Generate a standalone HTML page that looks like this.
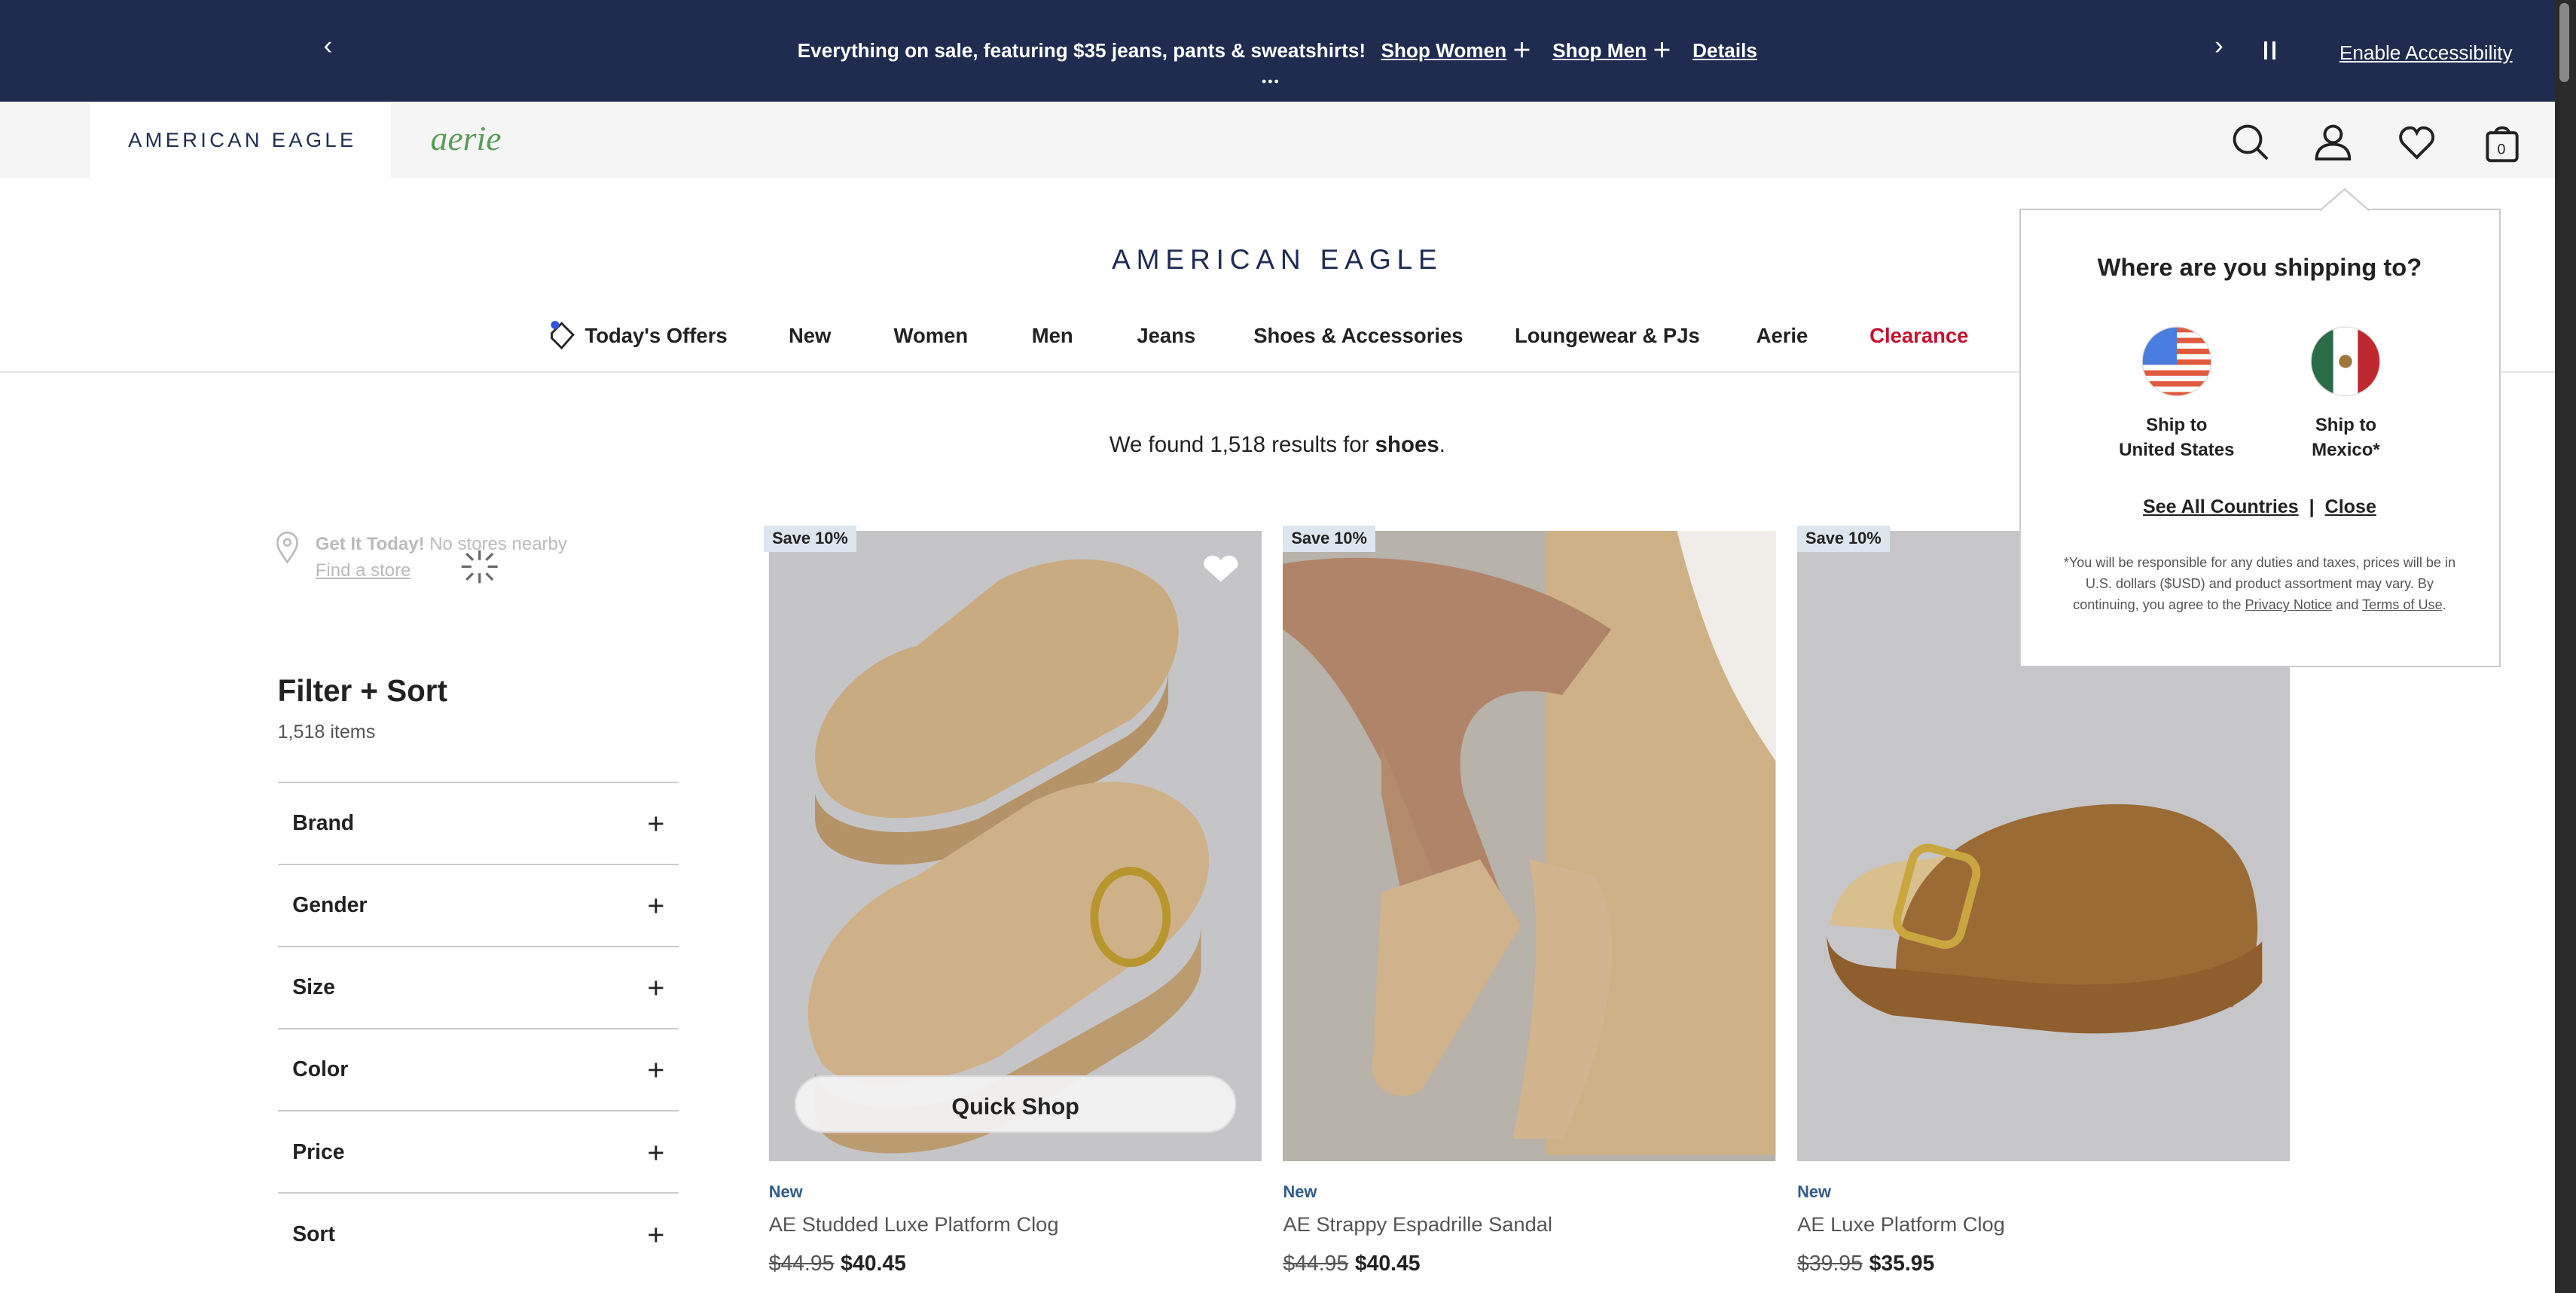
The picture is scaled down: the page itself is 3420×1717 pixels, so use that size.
<!DOCTYPE html>
<html><head><meta charset="utf-8"><style>
html{zoom:2.18112}
*{box-sizing:border-box;margin:0;padding:0}
body{width:1568px;height:787px;overflow:hidden;background:#fff;font-family:"Liberation Sans",sans-serif;color:#222;position:relative}
.a{position:absolute}
.top{left:0;top:0;width:1555px;height:62px;background:#1f2c50;color:#fff}
.top .t{left:0;width:1555px;top:21px;text-align:center;font-size:12px;font-weight:bold}
.top u{margin-left:6px}
.hdr{left:0;top:62px;width:1555px;height:46px;background:#f5f5f5}
.nav{top:197px;font-size:12.6px;font-weight:bold;color:#222}
.fl{left:169px;width:244px;border-top:1px solid #ccc;height:50px}
.fl span{position:absolute;left:9px;top:17px;font-size:13px;font-weight:bold}
.fl i{position:absolute;left:225px;top:17px;font-style:normal;font-size:18px;font-weight:300;line-height:16px}
.badge{background:#dde5ee;font-size:10px;font-weight:bold;padding:2px 5px;color:#222}
.new{font-size:10px;color:#2f5c8a;font-weight:bold}
.nm{font-size:12.5px;color:#555}
.pr{font-size:13px;font-weight:bold}
.pr s{font-weight:normal;color:#555;margin-right:4px}
</style></head><body>
<div class="a top">
 <div class="a" style="left:197px;top:19px;font-size:16px">&#8249;</div>
 <div class="a t">Everything on sale, featuring $35 jeans, pants &amp; sweatshirts! <u>Shop Women</u> ＋ &nbsp;<u>Shop Men</u> ＋ &nbsp;<u>Details</u></div>
 <div class="a" style="left:768px;top:45px;font-size:8px;letter-spacing:1px">•••</div>
 <div class="a" style="left:1348px;top:19px;font-size:16px">&#8250;</div>
 <div class="a" style="left:1378px;top:25px;height:11px;border-left:2px solid #fff;border-right:2px solid #fff;width:7px"></div>
 <div class="a" style="left:1418px;top:25px;font-size:12px"><u>Enable Accessibility</u></div>
</div>
<div class="a" style="left:1555px;top:0;width:13px;height:787px;background:#2a2a2a"><div class="a" style="left:3px;top:2px;width:6px;height:48px;background:#888;border-radius:3px"></div></div>
<div class="a hdr">
 <div class="a" style="left:55px;top:0;width:183px;height:46px;background:#fff"></div>
 <div class="a" style="left:78px;top:16px;font-size:12.5px;letter-spacing:2px;color:#1f2c50">AMERICAN EAGLE</div>
 <div class="a" style="left:262px;top:10px;font-size:21px;font-style:italic;font-family:'Liberation Serif',serif;color:#5d9a5d">aerie</div>
 <svg class="a" style="left:1357px;top:12px" width="180" height="26" viewBox="0 0 180 26" fill="none" stroke="#222" stroke-width="1.8">
  <circle cx="11" cy="11" r="8"/><path d="M17 17l6 6"/>
  <circle cx="63" cy="8" r="5"/><path d="M53 23c0-6 4-9 10-9s10 3 10 9z"/>
  <path d="M114 22l-8-8c-4-4-1-10 4-10 2 0 3 1 4 3 1-2 2-3 4-3 5 0 8 6 4 10z"/>
  <rect x="157" y="7" width="18" height="17" rx="2"/><path d="M162 7c0-4 8-4 8 0"/>
  <text x="163" y="20" font-size="9" fill="#222" stroke="none" font-family="Liberation Sans">0</text>
 </svg>
</div>
<div class="a" style="left:0;top:148px;width:1555px;text-align:center;font-size:17px;letter-spacing:3.6px;color:#1f2c50">AMERICAN EAGLE</div>
<svg class="a" style="left:333px;top:195px" width="18" height="20" viewBox="0 0 18 20" fill="none" stroke="#222" stroke-width="1.3"><path d="M3 8l6-6 7 7-7 8-6-6z"/><circle cx="5" cy="3" r="2.5" fill="#3355dd" stroke="none"/></svg>
<div class="a nav" style="left:356px">Today's Offers</div>
<div class="a nav" style="left:480px">New</div>
<div class="a nav" style="left:544px">Women</div>
<div class="a nav" style="left:628px">Men</div>
<div class="a nav" style="left:692px">Jeans</div>
<div class="a nav" style="left:763px">Shoes &amp; Accessories</div>
<div class="a nav" style="left:922px">Loungewear &amp; PJs</div>
<div class="a nav" style="left:1069px">Aerie</div>
<div class="a nav" style="left:1138px;color:#c8102e">Clearance</div>
<div class="a" style="left:0;top:226px;width:1555px;border-top:1px solid #e4e4e4"></div>
<div class="a" style="left:0;top:263px;width:1555px;text-align:center;font-size:13.5px">We found 1,518 results for <b>shoes</b>.</div>
<svg class="a" style="left:167px;top:323px" width="16" height="20" viewBox="0 0 16 20" fill="none" stroke="#bbb" stroke-width="1.2"><path d="M8 19C3 12 2 10 2 7a6 6 0 0112 0c0 3-1 5-6 12z"/><circle cx="8" cy="7" r="2"/></svg>
<div class="a" style="left:192px;top:325px;font-size:11px;color:#bbb"><b>Get It Today!</b> No stores nearby</div>
<div class="a" style="left:192px;top:341px;font-size:11px;color:#bbb;text-decoration:underline">Find a store</div>
<svg class="a" style="left:277px;top:331px" width="30" height="28" viewBox="0 0 30 28" stroke="#444" stroke-width="1.5"><path d="M15 4v6M15 18v6M4 14h6M20 14h6M7 6l4 4M19 18l4 4M7 22l4-4M19 10l4-4" opacity=".8"/></svg>
<div class="a" style="left:169px;top:410px;font-size:18.5px;font-weight:bold">Filter + Sort</div>
<div class="a" style="left:169px;top:439px;font-size:11.5px;color:#555">1,518 items</div>
<div class="a fl" style="top:476px"><span>Brand</span><i>+</i></div>
<div class="a fl" style="top:526px"><span>Gender</span><i>+</i></div>
<div class="a fl" style="top:576px"><span>Size</span><i>+</i></div>
<div class="a fl" style="top:626px"><span>Color</span><i>+</i></div>
<div class="a fl" style="top:676px"><span>Price</span><i>+</i></div>
<div class="a fl" style="top:726px"><span>Sort</span><i>+</i></div>

<svg class="a" style="left:468px;top:323px" width="300" height="384" viewBox="0 0 300 384">
 <rect width="300" height="384" fill="#c5c5c7"/>
 <path d="M30 150c-10-30 20-70 60-80l50-40c40-20 80-15 100 5 20 25 5 60-20 80l-90 50c-40 15-90 15-100-15z" fill="#c9ab82"/>
 <path d="M28 160c5 25 60 30 100 15l90-50c20-15 25-30 25-40l0 20c-5 20-20 30-30 40l-90 50c-40 15-95 10-95-20z" fill="#b59368"/>
 <path d="M30 320c-20-40 10-90 60-110l70-45c40-20 80-15 100 10 20 30 0 70-40 90l-80 55c-40 20-100 25-110 0z" fill="#cfb189"/>
 <path d="M28 330c10 30 80 25 110 5l90-50c25-15 35-30 35-45l0 25c0 15-15 30-35 45l-90 55c-40 20-110 20-110-10z" fill="#bb9b70"/>
 <ellipse cx="220" cy="235" rx="22" ry="28" fill="none" stroke="#b8962e" stroke-width="5"/>
 <path d="M275 18c-4-6-12-2-10 4l10 9 10-9c2-6-6-10-10-4z" fill="#fff"/>
 <rect x="16" y="332" width="268" height="34" rx="17" fill="#f2f2f2" fill-opacity=".95" stroke="#ddd"/>
 <text x="150" y="355" text-anchor="middle" font-size="14" font-weight="bold" font-family="Liberation Sans" fill="#222">Quick Shop</text>
</svg>
<svg class="a" style="left:781px;top:323px" width="300" height="384" viewBox="0 0 300 384">
 <rect width="300" height="384" fill="#b7b2aa"/>
 <rect x="160" y="0" width="140" height="380" fill="#cfb187"/>
 <path d="M240 0h60v140c-20-30-40-60-60-140z" fill="#f0ede8"/>
 <path d="M0 20c60-10 140 0 200 40l-30 40c-40-10-70 10-60 60l30 80-30 20-40-100c-20-40-40-80-70-100z" fill="#b08468"/>
 <path d="M60 130l40 100c15 20 20 30 10 40l-30-10-20-100z" fill="#b48a6c"/>
 <path d="M60 220l60-20 25 40-60 100c-15 10-35 0-30-20z" fill="#d0b28c"/>
 <path d="M150 200l40 10c20 30 10 100-20 160l-30 0c10-50 20-120 10-170z" fill="#d2b48e"/>
</svg>
<svg class="a" style="left:1094px;top:323px" width="300" height="384" viewBox="0 0 300 384">
 <rect width="300" height="384" fill="#c6c6c9"/>
 <path d="M20 240c5-30 30-40 60-40l40-10c30-20 70-30 100-10 30 15 50 40 60 80z" fill="#d9bf8e"/>
 <path d="M60 270c0-60 40-90 100-100 50-10 100 0 115 40 10 30 5 60-10 80z" fill="#9a6b35"/>
 <path d="M18 245c0 20 10 40 40 50l100 10c60 5 110-10 125-30v-25c-20 20-80 30-140 25l-100-10c-15-2-25-10-25-20z" fill="#8e5e2c"/>
 <rect x="65" y="195" width="40" height="55" rx="10" fill="none" stroke="#c9a640" stroke-width="5" transform="rotate(15 85 222)"/>
</svg>
<div class="a badge" style="left:465px;top:320px">Save 10%</div>
<div class="a badge" style="left:781px;top:320px">Save 10%</div>
<div class="a badge" style="left:1094px;top:320px">Save 10%</div>
<div class="a new" style="left:468px;top:720px">New</div>
<div class="a nm" style="left:468px;top:738px">AE Studded Luxe Platform Clog</div>
<div class="a pr" style="left:468px;top:762px"><s>$44.95</s>$40.45</div>
<div class="a new" style="left:781px;top:720px">New</div>
<div class="a nm" style="left:781px;top:738px">AE Strappy Espadrille Sandal</div>
<div class="a pr" style="left:781px;top:762px"><s>$44.95</s>$40.45</div>
<div class="a new" style="left:1094px;top:720px">New</div>
<div class="a nm" style="left:1094px;top:738px">AE Luxe Platform Clog</div>
<div class="a pr" style="left:1094px;top:762px"><s>$39.95</s>$35.95</div>

<div class="a" style="left:1229px;top:127px;width:293px;height:279px;background:#fff;border:1px solid #ccc">
 <div class="a" style="left:0;width:291px;top:26px;text-align:center;font-size:15px;font-weight:bold">Where are you shipping to?</div>
 <svg class="a" style="left:73px;top:70px" width="44" height="44" viewBox="0 0 44 44"><defs><clipPath id="c"><circle cx="22" cy="22" r="21"/></clipPath></defs><g clip-path="url(#c)"><rect width="44" height="44" fill="#fff"/><g fill="#e05a3e"><rect y="1" width="44" height="3.3"/><rect y="7.6" width="44" height="3.3"/><rect y="14.2" width="44" height="3.3"/><rect y="20.8" width="44" height="3.3"/><rect y="27.4" width="44" height="3.3"/><rect y="34" width="44" height="3.3"/><rect y="40.6" width="44" height="3.3"/></g><rect width="22" height="24" fill="#4a7de0"/></g><circle cx="22" cy="22" r="21" fill="none" stroke="#ddd" stroke-width=".6"/></svg>
 <svg class="a" style="left:176px;top:70px" width="44" height="44" viewBox="0 0 44 44"><defs><clipPath id="d"><circle cx="22" cy="22" r="21"/></clipPath></defs><g clip-path="url(#d)"><rect width="44" height="44" fill="#fff"/><rect width="14.5" height="44" fill="#2a6b48"/><rect x="29.5" width="14.5" height="44" fill="#c0282f"/><circle cx="22" cy="22" r="4" fill="#a0763a"/></g><circle cx="22" cy="22" r="21" fill="none" stroke="#ddd" stroke-width=".6"/></svg>
 <div class="a" style="left:45px;width:100px;top:124px;text-align:center;font-size:11px;font-weight:bold;line-height:15px">Ship to<br>United States</div>
 <div class="a" style="left:148px;width:100px;top:124px;text-align:center;font-size:11px;font-weight:bold;line-height:15px">Ship to<br>Mexico*</div>
 <div class="a" style="left:0;width:291px;top:174px;text-align:center;font-size:11.5px;font-weight:bold"><u>See All Countries</u> &nbsp;| &nbsp;<u>Close</u></div>
 <div class="a" style="left:22px;width:247px;top:208px;text-align:center;font-size:8.3px;color:#555;line-height:13px">*You will be responsible for any duties and taxes, prices will be in U.S. dollars ($USD) and product assortment may vary. By continuing, you agree to the <u>Privacy Notice</u> and <u>Terms of Use</u>.</div>
</div>
<svg class="a" style="left:1412px;top:114px" width="30" height="15" viewBox="0 0 30 15"><path d="M0 14L15 1 30 14" fill="#fff" stroke="#ccc"/><rect x="1" y="13.5" width="28" height="2" fill="#fff"/></svg>
</body></html>
